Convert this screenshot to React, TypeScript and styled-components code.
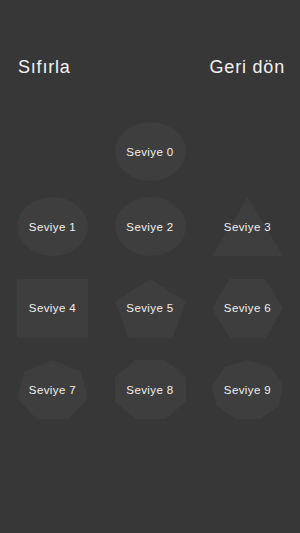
import React from "react";
import styled, { createGlobalStyle } from "styled-components";

const Global = createGlobalStyle`
  html, body { margin: 0; padding: 0; background: #373737; }
  body { font-family: "Liberation Sans", Arial, sans-serif; }
`;

const Page = styled.div`
  min-height: 533px;
  width: 300px;
  background: #373737;
  display: flex;
  flex-direction: column;
`;

const Header = styled.div`
  display: flex;
  justify-content: space-between;
  align-items: baseline;
  padding: 57px 15px 0 18px;
`;

const HeaderButton = styled.span`
  color: #f2f2f2;
  font-size: 18px;
  letter-spacing: 0.8px;
  line-height: 20px;
`;

const TopRow = styled.div`
  display: flex;
  justify-content: center;
  margin-top: 45px;
`;

const Grid = styled.div`
  display: grid;
  grid-template-columns: repeat(3, 71px);
  column-gap: 26.5px;
  row-gap: 22.5px;
  justify-content: center;
  margin-top: 16px;
`;

const Tile = styled.div`
  width: 71px;
  height: 59px;
  display: grid;
  place-items: center;
  cursor: pointer;
`;

const ShapeSvg = styled.svg`
  grid-area: 1 / 1;
  width: 71px;
  height: 59px;
  display: block;
`;

const Label = styled.span`
  grid-area: 1 / 1;
  color: #f0f0f0;
  font-size: 11.5px;
  letter-spacing: 0.4px;
  white-space: nowrap;
  position: relative;
`;

const FILL = "#3e3e3e";
const W = 71;
const H = 59;

function polygonPoints(n: number, startDeg: number): string {
  const pts: [number, number][] = [];
  for (let i = 0; i < n; i++) {
    const a = ((startDeg + (360 / n) * i) * Math.PI) / 180;
    pts.push([Math.cos(a), Math.sin(a)]);
  }
  const xs = pts.map((p) => p[0]);
  const ys = pts.map((p) => p[1]);
  const minX = Math.min(...xs);
  const maxX = Math.max(...xs);
  const minY = Math.min(...ys);
  const maxY = Math.max(...ys);
  return pts
    .map(
      ([x, y]) =>
        `${(((x - minX) / (maxX - minX)) * W).toFixed(2)},${(((y - minY) / (maxY - minY)) * H).toFixed(2)}`
    )
    .join(" ");
}

const shapeFor = (level: number): { n: number; start: number } | null => {
  switch (level) {
    case 3:
      return { n: 3, start: -90 };
    case 4:
      return { n: 4, start: 45 };
    case 5:
      return { n: 5, start: -90 };
    case 6:
      return { n: 6, start: 0 };
    case 7:
      return { n: 7, start: -90 };
    case 8:
      return { n: 8, start: -90 + 22.5 };
    case 9:
      return { n: 9, start: -90 };
    default:
      return null;
  }
};

const Level: React.FC<{ level: number }> = ({ level }) => {
  const s = shapeFor(level);
  return (
    <Tile>
      <ShapeSvg viewBox={`0 0 ${W} ${H}`}>
        {s ? (
          <polygon points={polygonPoints(s.n, s.start)} fill={FILL} />
        ) : (
          <ellipse cx={W / 2} cy={H / 2} rx={W / 2} ry={H / 2} fill={FILL} />
        )}
      </ShapeSvg>
      <Label>Seviye {level}</Label>
    </Tile>
  );
};

export default function App() {
  return (
    <Page>
      <Global />
      <Header>
        <HeaderButton>Sıfırla</HeaderButton>
        <HeaderButton>Geri dön</HeaderButton>
      </Header>
      <TopRow>
        <Level level={0} />
      </TopRow>
      <Grid>
        {[1, 2, 3, 4, 5, 6, 7, 8, 9].map((l) => (
          <Level key={l} level={l} />
        ))}
      </Grid>
    </Page>
  );
}
